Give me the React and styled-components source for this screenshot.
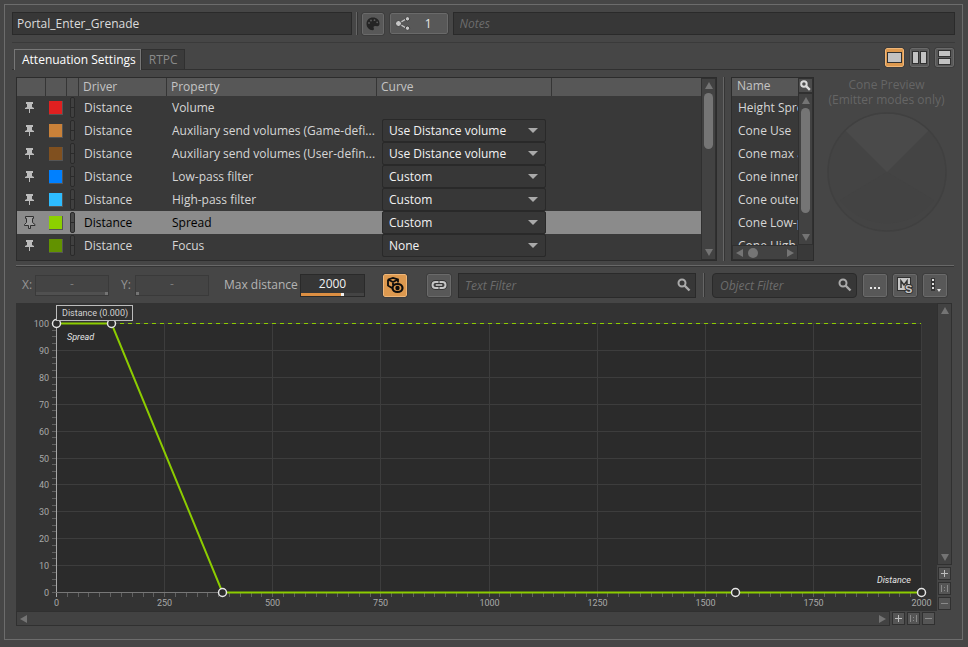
import React, { useLayoutEffect, useRef, useState } from "react";
import styled, { createGlobalStyle } from "styled-components";

const GlobalStyle = createGlobalStyle`
  * { box-sizing: border-box; }
  body {
    margin: 0;
    background: #464646;
    color: #d6d6d6;
    font-family: "Open Sans", "Noto Sans", sans-serif;
    font-size: 12px;
    line-height: 16px;
  }
  button, input, select { font: inherit; color: inherit; margin: 0; }
`;

const Page = styled.div`
  min-height: 100vh;
  display: flex;
  padding: 4px 5px 7px 4px;
`;

const Panel = styled.main`
  flex: 1;
  min-width: 0;
  display: flex;
  flex-direction: column;
  border: 1px solid #6c6c6c;
  padding: 7px 7px 13px 7px;
`;

const HeaderBar = styled.header`
  display: flex;
  align-items: center;
  gap: 4px;
  padding-bottom: 7px;
  border-bottom: 1px solid #3a3a3a;
`;

const TextBox = styled.input`
  flex: ${(p) => p.$grow} 1 0;
  min-width: 0;
  height: ${(p) => p.$height || 23}px;
  padding: 0 ${(p) => (p.$icon ? 28 : 4)}px 0 ${(p) => p.$indent || 4}px;
  background: #373737;
  border: 1px solid #2a2a2a;
  border-radius: ${(p) => (p.$round ? 4 : 0)}px;
  color: #dcdcdc;
  outline: none;
  &::placeholder { color: #6c6c6c; font-style: italic; opacity: 1; }
`;

const Divider = styled.div`
  width: 2px;
  align-self: stretch;
  background: linear-gradient(to right, #666 50%, #353535 50%);
`;

const IconButton = styled.button`
  flex: none;
  display: flex;
  align-items: center;
  justify-content: center;
  width: ${(p) => p.$w}px;
  height: ${(p) => p.$h}px;
  padding: 0;
  background: ${(p) => (p.$active ? "#dd994f" : "#585858")};
  border: 1px solid ${(p) => (p.$active ? "#efb678" : "#6a6a6a")};
  border-radius: 2px;
  outline: 1px solid #3d3d3d;
  outline-offset: 0;
  color: #c6c6c6;
`;

const ShareButton = styled(IconButton)`
  justify-content: flex-start;
  padding: 0 15px 0 4px;
  margin: 0 1px 0 2px;
  span { margin-left: auto; color: #e8e8e8; }
`;

const TabBar = styled.div`
  display: flex;
  justify-content: space-between;
  height: 27px;
`;

const TabList = styled.div`
  flex: 1;
  display: flex;
  align-items: flex-end;
  margin-right: 5px;
  padding-left: 2px;
  border-bottom: 1px solid #303030;
`;

const Tab = styled.button`
  padding: 0 ${(p) => (p.$active ? 4 : 6)}px 0 7px;
  line-height: 18px;
  border: 1px solid ${(p) => (p.$active ? "#777" : "#303030")};
  border-bottom: 0;
  background: ${(p) => (p.$active ? "#464646" : "#3b3b3b")};
  color: ${(p) => (p.$active ? "#fff" : "#8a8a8a")};
  height: ${(p) => (p.$active ? 21 : 20)}px;
  margin-bottom: ${(p) => (p.$active ? -1 : 0)}px;
`;

const ViewButtons = styled.div`
  display: flex;
  gap: 6px;
  padding: 5px 1px 0 0;
`;

const UpperArea = styled.section`
  display: flex;
  height: 184px;
  margin: 7px 0 0 4px;
`;

const GridFrame = styled.div`
  flex: 1;
  min-width: 0;
  display: flex;
  border: 1px solid #2c2c2c;
  background: #393939;
`;

const TableScroll = styled.div`
  flex: 1;
  min-width: 0;
  overflow: hidden;
`;

const CurveTable = styled.table`
  width: 100%;
  table-layout: fixed;
  border-collapse: collapse;
  th {
    height: 18px;
    padding: 0 0 0 4px;
    text-align: left;
    font-weight: 400;
    line-height: 16px;
    color: #c4c4c4;
    background: linear-gradient(to left, #353535 1px, transparent 1px) #575757;
  }
  th:last-child { background: #575757; }
  td {
    height: 23px;
    padding: 0 0 0 5px;
    line-height: 20px;
    white-space: nowrap;
    overflow: hidden;
  }
  td:nth-child(-n + 3) { padding: 0; }
`;

const CurveRow = styled.tr`
  background: ${(p) => (p.$selected ? "#8b8b8b" : "transparent")};
  color: ${(p) => (p.$selected ? "#000" : "#d6d6d6")};
`;

const PinIcon = styled.svg`
  display: block;
  margin-left: 6px;
`;

const ColorSwatch = styled.span`
  display: block;
  width: 14px;
  height: 14px;
  margin-left: 3px;
  background: ${(p) => p.$color};
  border-right: 1px solid #555;
  border-bottom: 1px solid #555;
`;

const MiniMeter = styled.span`
  display: block;
  width: 5px;
  height: 21px;
  margin-left: 3px;
  border: 1px solid #2a2a2a;
  border-radius: 2px;
  background: linear-gradient(${(p) => (p.$selected ? "#4a4a4a" : "#404040")} 9px, #2a2a2a 9px, #2a2a2a 10px, ${(p) => (p.$selected ? "#4a4a4a" : "#404040")} 10px);
`;

const SelectWrap = styled.div`
  display: grid;
  width: 164px;
  align-items: center;
  justify-items: end;
  background: #373737;
  border: 1px solid #292929;
  border-radius: 2px;
  height: 23px;
  select, svg { grid-area: 1 / 1; }
  svg { margin-right: 7px; pointer-events: none; }
`;

const CurveSelect = styled.select`
  appearance: none;
  width: 100%;
  height: 20px;
  padding: 0 24px 0 6px;
  border: 0;
  background: transparent;
  color: #f2f2f2;
`;

const ScrollTrack = styled.div`
  flex: ${(p) => (p.$fill ? "1" : "none")};
  display: flex;
  flex-direction: ${(p) => (p.$vertical ? "column" : "row")};
  align-items: center;
  justify-content: space-between;
  ${(p) => (p.$vertical ? "width" : "height")}: 15px;
  padding: ${(p) => (p.$vertical ? "3px 0" : "0 3px")};
  background: #424242;
  border: 1px solid #303030;
`;

const ScrollArrow = styled.button`
  display: flex;
  padding: 0;
  border: 0;
  background: none;
  color: #747474;
`;

const ScrollThumb = styled.div`
  width: ${(p) => p.$w}px;
  height: ${(p) => p.$h}px;
  margin: ${(p) => (p.$vertical ? "3px 0 auto" : "0 auto 0 4px")};
  border-radius: 6px;
  background: #757575;
`;

const ListFrame = styled.div`
  flex: none;
  display: grid;
  grid-template: minmax(0, 1fr) 15px / minmax(0, 1fr) 15px;
  width: 83px;
  border: 1px solid #2c2c2c;
  background: #393939;
`;

const ListColumn = styled.div`
  display: flex;
  flex-direction: column;
`;

const NameList = styled.div`
  overflow: hidden;
  white-space: nowrap;
`;

const NameHeader = styled.div`
  height: 18px;
  padding-left: 5px;
  background: #575757;
  color: #c4c4c4;
`;

const NameItem = styled.div`
  height: 23px;
  padding-left: 6px;
  line-height: 23px;
`;

const SearchButton = styled.button`
  display: flex;
  align-items: center;
  justify-content: center;
  height: 15px;
  padding: 0;
  border: 1px solid #303030;
  background: #4c4c4c;
  color: #dadada;
`;

const SideSplitter = styled(Divider)`
  margin: 0 6px;
`;

const ConePreview = styled.div`
  flex: none;
  display: flex;
  flex-direction: column;
  align-items: center;
  width: 137px;
  margin-left: 4px;
  color: #656565;
`;

const ConeCaption = styled.p`
  margin: 0 0 5px;
  line-height: 15px;
  text-align: center;
  white-space: nowrap;
`;

const HorizontalSplitter = styled.div`
  height: 2px;
  margin: 4px 1px 0 4px;
  background: linear-gradient(#686868 50%, #353535 50%);
`;

const Toolbar = styled.section`
  display: flex;
  align-items: center;
  height: 36px;
  padding-left: 10px;
`;

const FieldLabel = styled.label`
  flex: none;
  width: ${(p) => p.$w}px;
  color: ${(p) => (p.$bright ? "#b4b4b4" : "#969696")};
`;

const ValueField = styled.div`
  flex: none;
  display: flex;
  flex-direction: column;
  width: ${(p) => p.$w}px;
  height: ${(p) => (p.$live ? 23 : 21)}px;
  margin-right: ${(p) => p.$after}px;
  border: 1px solid ${(p) => (p.$live ? "#2a2a2a" : "#3a3a3a")};
  background: ${(p) => (p.$live ? "#363636" : "#444")};
  color: ${(p) => (p.$live ? "#f2f2f2" : "#7c7c7c")};
`;

const ValueInput = styled.input`
  width: 100%;
  flex: 1;
  min-height: 0;
  padding: 0;
  border: 0;
  background: transparent;
  text-align: center;
  outline: none;
`;

const ValueSlider = styled.input`
  appearance: none;
  width: 100%;
  height: 3px;
  background: linear-gradient(to right, ${(p) => p.$fill} ${(p) => p.$pct}%, ${(p) => p.$rest} ${(p) => p.$pct}%);
  &::-webkit-slider-thumb {
    appearance: none;
    width: 3px;
    height: 3px;
    background: ${(p) => p.$thumb};
  }
`;

const ToolGroup = styled.div`
  display: flex;
  align-items: center;
  gap: 20px;
  margin: 0 7px 0 10px;
`;

const FilterBox = styled.div`
  flex: ${(p) => p.$grow} 1 0;
  min-width: 0;
  display: grid;
  align-items: center;
  justify-items: end;
  > * { grid-area: 1 / 1; }
  > input { width: 100%; }
  > svg { margin-right: 5px; color: #aaa; }
`;

const ToolDivider = styled(Divider)`
  flex: none;
  margin: 6px 7px;
`;

const ToolButtons = styled.div`
  display: flex;
  gap: 6px;
  margin: 0 8px 0 6px;
`;

const ChartArea = styled.section`
  flex: 1;
  display: grid;
  grid-template: minmax(308px, 1fr) 15px / minmax(0, 1fr) 15px;
  margin: 0 3px 0 4px;
`;

const ChartCanvas = styled.svg`
  display: block;
  width: 100%;
  height: 100%;
  background: #333;
  font-family: Roboto, "Open Sans", sans-serif;
  font-size: 9px;
  fill: #a8a8a8;
`;

const ZoomColumn = styled.div`
  display: flex;
  flex-direction: column;
  align-items: center;
  gap: 2px;
  padding-bottom: 1px;
`;

const ZoomRow = styled.div`
  display: flex;
  align-items: center;
  gap: 2px;
  padding-right: 2px;
`;

const ZoomButton = styled.button`
  flex: none;
  display: flex;
  align-items: center;
  justify-content: center;
  width: 13px;
  height: 13px;
  padding: 0;
  border: 1px solid #303030;
  background: #555;
  color: ${(p) => (p.$bright ? "#bcbcbc" : "#8a8a8a")};
`;

function Arrow({ dir }) {
  const d = {
    up: "M4 0 8 7H0Z",
    down: "M0 1H8L4 8Z",
    left: "M0 4 7 0V8Z",
    right: "M8 4 1 0V8Z",
  }[dir];
  return (
    <ScrollArrow aria-label={`Scroll ${dir}`}>
      <svg width="8" height="8"><path d={d} fill="currentColor" /></svg>
    </ScrollArrow>
  );
}

function Pin({ selected }) {
  return (
    <PinIcon width="13" height="13" viewBox="0 0 13 13">
      {selected ? (
        <path d="M2.5.5h8v2h-1v4l2.500 2v1H7.500v3h-2v-3H1.500v-1l2-2v-4h-1z" fill="#a0a0a0" stroke="#303030" />
      ) : (
        <path d="M3 1h7v2H9v3l2 1v1H7v4H6V8H2V7l2-1V3H3z" fill="#bcbcbc" />
      )}
    </PinIcon>
  );
}

function SearchIcon({ size = 14, weight = 2 }) {
  return (
    <svg width={size} height={size} viewBox="0 0 14 14" fill="none" stroke="currentColor" strokeWidth={weight}>
      <circle cx="5" cy="5" r="3.500" />
      <path d="M7.500 7.500 12.500 12.500" strokeWidth={weight + 0.4} />
    </svg>
  );
}

function ZoomGlyph({ kind }) {
  return (
    <svg width="9" height="9" shapeRendering="crispEdges" fill="currentColor">
      {kind !== "fit" && <rect x="1" y="4" width="7" height="1" />}
      {kind === "in" && <rect x="4" y="1" width="1" height="7" />}
      {kind === "fit" && <path d="M1 1h1v7H1zM7 1h1v7H7zM4 3h1v1H4zM4 6h1v1H4z" />}
    </svg>
  );
}

const zoomKinds = [["in", "Zoom in"], ["fit", "Reset zoom"], ["out", "Zoom out"]];

function ZoomButtons() {
  return zoomKinds.map(([kind, label]) => (
    <ZoomButton key={kind} aria-label={label} $bright={kind === "in"}>
      <ZoomGlyph kind={kind} />
    </ZoomButton>
  ));
}

const curves = [
  { color: "#e02020", property: "Volume" },
  { color: "#c98139", property: "Auxiliary send volumes (Game-defi...", curve: "Use Distance volume" },
  { color: "#80501f", property: "Auxiliary send volumes (User-defin...", curve: "Use Distance volume" },
  { color: "#0080ff", property: "Low-pass filter", curve: "Custom" },
  { color: "#2ebcff", property: "High-pass filter", curve: "Custom" },
  { color: "#8cd000", property: "Spread", curve: "Custom", selected: true },
  { color: "#629200", property: "Focus", curve: "None" },
];

const coneNames = ["Height Spread", "Cone Use", "Cone max attenuation", "Cone inner angle", "Cone outer angle", "Cone Low-pass filter", "Cone High-pass filter"];

function CurveGrid() {
  return (
    <GridFrame>
      <TableScroll>
        <CurveTable>
          <colgroup>
            <col style={{ width: 29 }} />
            <col style={{ width: 21 }} />
            <col style={{ width: 12 }} />
            <col style={{ width: 88 }} />
            <col style={{ width: 210 }} />
            <col style={{ width: 175 }} />
            <col />
          </colgroup>
          <thead>
            <tr><th /><th /><th /><th>Driver</th><th>Property</th><th>Curve</th><th /></tr>
          </thead>
          <tbody>
            {curves.map((row) => (
              <CurveRow key={row.property} $selected={row.selected}>
                <td><Pin selected={row.selected} /></td>
                <td><ColorSwatch $color={row.color} /></td>
                <td><MiniMeter $selected={row.selected} /></td>
                <td>Distance</td>
                <td>{row.property}</td>
                <td>
                  {row.curve && (
                    <SelectWrap>
                      <CurveSelect aria-label={`${row.property} curve`} defaultValue={row.curve}>
                        <option>None</option>
                        <option>Use Distance volume</option>
                        <option>Custom</option>
                      </CurveSelect>
                      <svg width="10" height="5"><path d="M0 0h10L5 5z" fill="#aaa" /></svg>
                    </SelectWrap>
                  )}
                </td>
                <td />
              </CurveRow>
            ))}
          </tbody>
        </CurveTable>
      </TableScroll>
      <ScrollTrack $vertical>
        <Arrow dir="up" />
        <ScrollThumb $vertical $w={9} $h={56} />
        <Arrow dir="down" />
      </ScrollTrack>
    </GridFrame>
  );
}

function ConeList() {
  return (
    <ListFrame>
      <NameList>
        <NameHeader>Name</NameHeader>
        {coneNames.map((name) => <NameItem key={name}>{name}</NameItem>)}
      </NameList>
      <ListColumn>
        <SearchButton aria-label="Search names"><SearchIcon size={11} weight={2.5} /></SearchButton>
        <ScrollTrack $vertical $fill>
          <Arrow dir="up" />
          <ScrollThumb $vertical $w={9} $h={105} />
          <Arrow dir="down" />
        </ScrollTrack>
      </ListColumn>
      <ScrollTrack>
        <Arrow dir="left" />
        <ScrollThumb $w={10} $h={10} />
        <Arrow dir="right" />
      </ScrollTrack>
    </ListFrame>
  );
}

const points = [[0, 100], [128, 100], [383, 0], [1571, 0], [2000, 0]];

function AttenuationChart() {
  const ref = useRef(null);
  const [size, setSize] = useState({ w: 921, h: 308 });
  useLayoutEffect(() => {
    const measure = () => {
      const box = ref.current.getBoundingClientRect();
      setSize({ w: Math.round(box.width), h: Math.round(box.height) });
    };
    measure();
    const observer = new ResizeObserver(measure);
    observer.observe(ref.current);
    return () => observer.disconnect();
  }, []);

  const left = 40;
  const right = size.w - 16;
  const top = 20;
  const bottom = size.h - 19;
  const px = (v) => Math.round(left + ((right - left) * v) / 2000) + 0.5;
  const py = (v) => Math.round(bottom - ((bottom - top) * v) / 100) + 0.5;
  const steps = (n, by) => Array.from({ length: n + 1 }, (_, i) => i * by);

  return (
    <ChartCanvas ref={ref} role="img" aria-label="Spread over distance">
      <rect x={left} y={top} width={right - left} height={bottom - top} fill="#2b2b2b" />
      <g stroke="#3d3d3d">
        {steps(8, 250).map((v) => <path key={v} d={`M${px(v)} ${top}V${bottom}`} />)}
        {steps(10, 10).map((v) => <path key={v} d={`M${left} ${py(v)}H${right}`} />)}
      </g>
      <g stroke="#606060">
        {steps(80, 25).map((v) => <path key={v} d={`M${px(v)} ${bottom}v5`} />)}
        {steps(40, 2.5).map((v) => <path key={v} d={`M${left - 4} ${py(v)}h4`} />)}
      </g>
      <path d={`M${px(0)} ${top}V${bottom + 5}`} stroke="#a8a8a8" />
      <path d={`M${left} ${py(0)}H${right}`} stroke="#777" />
      <path d={`M${px(128) + 0.5} ${py(100)}H${right}`} stroke="#8ccc00" strokeDasharray="4 4" />
      <g textAnchor="end">
        {steps(10, 10).map((v) => <text key={v} x={left - 7} y={py(v) + 3}>{v}</text>)}
      </g>
      <g textAnchor="middle">
        {steps(8, 250).map((v) => <text key={v} x={px(v)} y={bottom + 14}>{v}</text>)}
      </g>
      <g fontStyle="italic" fill="#e4e4e4">
        <text x={left + 11} y={top + 17}>Spread</text>
        <text x={right - 10} y={bottom - 9} textAnchor="end">Distance</text>
      </g>
      <polyline points={points.map(([x, y]) => `${px(x)},${py(y)}`).join(" ")} fill="none" stroke="#8ccc00" strokeWidth="2" />
      <g fill="#2b2b2b" stroke="#e6e6e6" strokeWidth="1.500">
        {points.map(([x, y]) => <circle key={x} cx={px(x)} cy={py(y)} r="4" />)}
      </g>
      <rect x={left + 0.5} y="2.500" width="76" height="15" fill="#303030" stroke="#bcbcbc" />
      <text x={left + 6} y="13" fill="#d2d2d2">Distance (0.000)</text>
    </ChartCanvas>
  );
}

export default function App() {
  return (
    <>
      <GlobalStyle />
      <Page>
        <Panel>
          <HeaderBar>
            <TextBox $grow={338} aria-label="Name" defaultValue="Portal_Enter_Grenade" />
            <Divider />
            <IconButton $w={22} $h={22} aria-label="Color">
              <svg width="14" height="14" viewBox="0 0 14 14">
                <path d="M7 .5C3 .5.500 3.200.500 6.800c0 3.500 2.600 6.400 6 6.400 1.400 0 1.700-1 1.200-2.100-.5-1.200.2-2.200 1.500-2.100l2 .2c1.600 0 2.300-1 2.300-2.700C13.500 3 10.800.5 7 .5z" fill="#242424" />
                <g fill="#5c5c5c"><circle cx="5" cy="3.500" r=".9" /><circle cx="8.500" cy="3.200" r=".9" /><circle cx="11.200" cy="5.300" r=".9" /><circle cx="3" cy="6" r=".9" /></g>
              </svg>
            </IconButton>
            <ShareButton $w={58} $h={21} aria-label="Shared by 1">
              <svg width="16" height="15" viewBox="0 0 16 15">
                <path d="M12 2.500 3.500 7.500 12 12.500" fill="none" stroke="#c6c6c6" strokeWidth="1.400" />
                <g fill="#c6c6c6" stroke="#404040"><circle cx="3.500" cy="7.500" r="3" /><circle cx="12.500" cy="2.800" r="2.200" /><circle cx="12.500" cy="12.200" r="2.200" /></g>
              </svg>
              <span>1</span>
            </ShareButton>
            <TextBox $grow={503} $indent={6} aria-label="Notes" placeholder="Notes" />
          </HeaderBar>

          <TabBar>
            <TabList role="tablist">
              <Tab role="tab" aria-selected="true" $active>Attenuation Settings</Tab>
              <Tab role="tab" aria-selected="false">RTPC</Tab>
            </TabList>
            <ViewButtons>
              <IconButton $w={19} $h={19} $active aria-label="Single view">
                <svg width="15" height="11"><rect x=".5" y=".5" width="14" height="10" fill="#c2c2c2" stroke="#303030" /></svg>
              </IconButton>
              <IconButton $w={19} $h={19} aria-label="Side by side view">
                <svg width="15" height="13" fill="#c2c2c2" stroke="#303030"><rect x=".5" y=".5" width="6" height="12" /><rect x="8.500" y=".5" width="6" height="12" /></svg>
              </IconButton>
              <IconButton $w={19} $h={19} aria-label="Stacked view">
                <svg width="13" height="15" fill="#c2c2c2" stroke="#303030"><rect x=".5" y=".5" width="12" height="6" /><rect x=".5" y="8.500" width="12" height="6" /></svg>
              </IconButton>
            </ViewButtons>
          </TabBar>

          <UpperArea>
            <CurveGrid />
            <SideSplitter />
            <ConeList />
            <ConePreview>
              <ConeCaption>Cone Preview<br />(Emitter modes only)</ConeCaption>
              <svg width="120" height="120" viewBox="0 0 120 120">
                <circle cx="60" cy="60" r="59" fill="#444" />
                <path d="M60 60 18.500 18.500A59 59 0 0 1 101.500 18.500Z" fill="#4a4a4a" />
                <path d="M60 60 13 88A59 59 0 0 0 107 88Z" fill="#434343" />
                <circle cx="60" cy="60" r="59" fill="none" stroke="#404040" strokeWidth="1.500" />
              </svg>
            </ConePreview>
          </UpperArea>

          <HorizontalSplitter />

          <Toolbar>
            <FieldLabel htmlFor="point-x" $w={13}>X:</FieldLabel>
            <ValueField $w={74} $after={12}>
              <ValueInput id="point-x" defaultValue="-" disabled />
              <ValueSlider type="range" aria-label="X" defaultValue={100} disabled $fill="#505050" $rest="#505050" $thumb="#747474" $pct={100} />
            </ValueField>
            <FieldLabel htmlFor="point-y" $w={14}>Y:</FieldLabel>
            <ValueField $w={74} $after={15}>
              <ValueInput id="point-y" defaultValue="-" disabled />
              <ValueSlider type="range" aria-label="Y" defaultValue={0} disabled $fill="#444" $rest="#444" $thumb="#747474" $pct={0} />
            </ValueField>
            <FieldLabel htmlFor="max-distance" $w={76} $bright>Max distance</FieldLabel>
            <ValueField $w={65} $after={8} $live>
              <ValueInput id="max-distance" defaultValue="2000" />
              <ValueSlider type="range" aria-label="Max distance slider" defaultValue={66} $fill="#dd8f42" $rest="#444" $thumb="#eee" $pct={64} />
            </ValueField>
            <ToolGroup>
              <IconButton $w={24} $h={23} $active aria-label="Show game objects">
                <svg width="18" height="18" viewBox="0 0 18 18" fill="none" stroke="#0c0c0c" strokeWidth="1.800">
                  <path d="M2 3.500 7 2l5 1.500v3M2 3.500v6l4 2.500M2 3.500 7 6l5-2.500M7 6v3" />
                  <ellipse cx="11.500" cy="12" rx="5" ry="4" fill="#dd994f" strokeWidth="2.200" />
                  <circle cx="11.500" cy="12" r="1.300" fill="#0c0c0c" />
                </svg>
              </IconButton>
              <IconButton $w={24} $h={23} aria-label="Link">
                <svg width="18" height="10" viewBox="0 0 18 10" fill="none">
                  <g stroke="#353535" strokeWidth="4"><rect x="2.500" y="2" width="13" height="6" rx="3" /></g>
                  <g stroke="#c6c6c6" strokeWidth="2"><rect x="2.500" y="2" width="13" height="6" rx="3" /></g>
                  <path d="M9 0v3M9 7v3" stroke="#444" />
                  <path d="M6 5h6" stroke="#c6c6c6" strokeWidth="1.500" />
                </svg>
              </IconButton>
            </ToolGroup>
            <FilterBox $grow={238}>
              <TextBox $height={25} $indent={6} $icon aria-label="Text Filter" placeholder="Text Filter" />
              <SearchIcon />
            </FilterBox>
            <ToolDivider />
            <FilterBox $grow={145}>
              <TextBox $height={25} $indent={7} $icon $round aria-label="Object Filter" placeholder="Object Filter" />
              <SearchIcon />
            </FilterBox>
            <ToolButtons>
              <IconButton $w={24} $h={23} aria-label="Browse">
                <svg width="10" height="10" fill="#e8e8e8"><path d="M0 7h2v2H0zM4 7h2v2H4zM8 7h2v2H8z" /></svg>
              </IconButton>
              <IconButton $w={24} $h={23} aria-label="Mute and solo">
                <svg width="18" height="18" viewBox="0 0 18 18">
                  <rect x="1.500" y="1.500" width="13" height="13" fill="#c6c6c6" stroke="#303030" />
                  <path d="M5 12V5L8 9 11 5V9" fill="none" stroke="#303030" strokeWidth="1.500" />
                  <text x="9" y="17" fontSize="11" fontWeight="700" fontFamily="Liberation Sans, sans-serif" fill="#c6c6c6" stroke="#303030" strokeWidth="2" paintOrder="stroke">S</text>
                </svg>
              </IconButton>
              <IconButton $w={24} $h={23} aria-label="More options">
                <svg width="16" height="16" viewBox="0 0 16 16">
                  <rect x="4" y="1" width="4" height="13" fill="#353535" />
                  <path d="M5 2h2v2H5zM5 6h2v2H5zM5 10h2v2H5zM10 12h4l-2 3z" fill="#dedede" />
                </svg>
              </IconButton>
            </ToolButtons>
          </Toolbar>

          <ChartArea>
            <AttenuationChart />
            <ZoomColumn>
              <ScrollTrack $vertical $fill>
                <Arrow dir="up" />
                <Arrow dir="down" />
              </ScrollTrack>
              <ZoomButtons />
            </ZoomColumn>
            <ZoomRow>
              <ScrollTrack $fill>
                <Arrow dir="left" />
                <Arrow dir="right" />
              </ScrollTrack>
              <ZoomButtons />
            </ZoomRow>
          </ChartArea>
        </Panel>
      </Page>
    </>
  );
}
